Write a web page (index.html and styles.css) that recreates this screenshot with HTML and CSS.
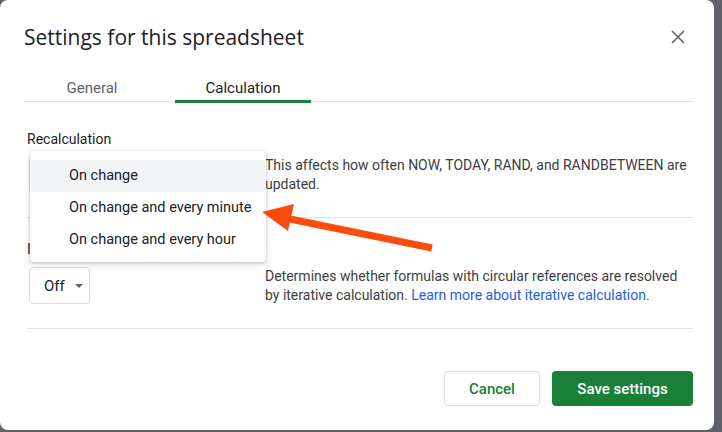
FILE: index.html
```html
<!DOCTYPE html>
<html lang="en">
<head>
  <meta charset="UTF-8" />
  <title>Settings for this spreadsheet</title>
  <link rel="stylesheet" href="styles.css">
</head>
<body>

  <div class="dialog">
    <div class="header">
      <h1 class="title">Settings for this spreadsheet</h1>
      <button class="close" aria-label="Close">
        <svg width="14" height="14" viewBox="0 0 14 14">
          <path d="M1 1L13 13M13 1L1 13" stroke="#5f6368" stroke-width="1.6" fill="none"/>
        </svg>
      </button>
    </div>

    <div class="tabs">
      <div class="tab">General</div>
      <div class="tab active">Calculation</div>
    </div>

    <div class="section first">
      <div class="label">Recalculation</div>
      <div class="row">
        <div class="col-left">
          <div class="select wide">On change <span class="caret"></span></div>
        </div>
        <div class="desc">This affects how often NOW, TODAY, RAND, and RANDBETWEEN are updated.</div>
      </div>
    </div>

    <div class="section second">
      <div class="label">Iterative calculation</div>
      <div class="row">
        <div class="col-left">
          <div class="select">Off <span class="caret"></span></div>
        </div>
        <div class="desc">Determines whether formulas with circular references are resolved by iterative calculation. <a href="#">Learn more about iterative calculation.</a></div>
      </div>
    </div>

    <div class="footer">
      <button class="btn cancel">Cancel</button>
      <button class="btn save">Save settings</button>
    </div>

    <!-- open dropdown menu -->
    <div class="menu">
      <div class="menu-item hover">On change</div>
      <div class="menu-item">On change and every minute</div>
      <div class="menu-item">On change and every hour</div>
    </div>

    <!-- annotation arrow -->
    <svg class="arrow" width="714" height="430" viewBox="0 0 714 430">
      <line x1="432" y1="248" x2="285" y2="218" stroke="#fc4c0c" stroke-width="7"/>
      <polygon points="262,212 294,204 288,231" fill="#fc4c0c"/>
    </svg>
  </div>

</body>
</html>
```

FILE: styles.css
```css
* { box-sizing: border-box; }

body {
  margin: 0;
  background: #5f6368;
  font-family: Roboto, 'Noto Sans', sans-serif;
  color: #202124;
  overflow: hidden;
}

.dialog {
  position: relative;
  width: 714px;
  height: 430px;
  background: #fff;
  border-radius: 8px;
}

.header {
  display: flex;
  justify-content: space-between;
  align-items: center;
  padding: 23px 29px 0 24px;
  height: 50px;
}

.title {
  margin: 0;
  font-family: 'Open Sans', Roboto, sans-serif;
  font-size: 21px;
  font-weight: 400;
  line-height: 28px;
  color: #202124;
}

.close {
  border: none;
  background: none;
  padding: 0;
  width: 14px;
  height: 14px;
}

.tabs {
  display: flex;
  gap: 15px;
  margin: 20px 21px 0 24px;
  border-bottom: 1px solid #e3e3e3;
  height: 32px;
}

.tab {
  position: relative;
  width: 136px;
  text-align: center;
  font-size: 15px;
  line-height: 20px;
  padding-top: 8px;
  color: #5f6368;
}

.tab.active {
  color: #202124;
}

.tab.active::after {
  content: "";
  position: absolute;
  left: 0;
  right: 0;
  bottom: -2px;
  height: 3px;
  background: #188038;
}

.section {
  margin: 0 21px 0 27px;
  border-bottom: 1px solid #e3e3e3;
}

.section.first {
  padding: 27px 0 21px;
  height: 116px;
}

.section.first .desc {
  margin-top: -1px;
}

.section.second {
  padding: 21px 0 25px;
  height: 111px;
}

.label {
  font-size: 14px;
  line-height: 20px;
  color: #202124;
}

.row {
  display: flex;
  margin-top: 8px;
}

.col-left {
  width: 238px;
  flex: none;
  padding-left: 2px;
}

.select {
  display: inline-flex;
  align-items: center;
  height: 37px;
  padding: 0 6px 0 14px;
  border: 1px solid #dadce0;
  border-radius: 4px;
  font-size: 15px;
  color: #202124;
}

.select.wide {
  width: 200px;
  justify-content: space-between;
}

.caret {
  margin-left: 10px;
  width: 0;
  height: 0;
  border-left: 4px solid transparent;
  border-right: 4px solid transparent;
  border-top: 4px solid #5f6368;
}

.desc {
  font-size: 14px;
  line-height: 19px;
  color: #3c4043;
}

.desc a {
  color: #1a62d8;
  text-decoration: none;
}

.footer {
  display: flex;
  justify-content: flex-end;
  gap: 12px;
  margin: 42px 21px 0 0;
}

.btn {
  height: 35px;
  border-radius: 4px;
  font-family: Roboto, sans-serif;
  font-size: 15px;
  font-weight: 500;
  padding: 0;
}

.cancel {
  width: 96px;
  background: #fff;
  border: 1px solid #dadce0;
  color: #188038;
}

.save {
  width: 141px;
  background: #188038;
  border: none;
  color: #fff;
}

.menu {
  position: absolute;
  left: 30px;
  top: 151px;
  width: 236px;
  height: 111px;
  padding: 9px 1px 6px;
  background: #fff;
  border-radius: 4px;
  box-shadow: 0 1px 3px rgba(60,64,67,0.3), 0 3px 8px rgba(60,64,67,0.12);
}

.menu-item {
  height: 32px;
  line-height: 32px;
  padding-left: 38px;
  font-size: 14.5px;
  color: #202124;
}

.menu-item.hover {
  background: #f1f3f4;
}

.arrow {
  position: absolute;
  left: 0;
  top: 0;
  pointer-events: none;
}
```
